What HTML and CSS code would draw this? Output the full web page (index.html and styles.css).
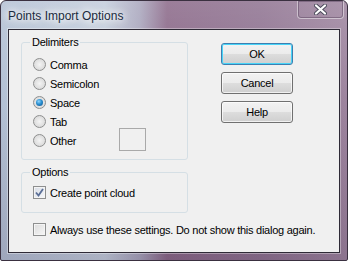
FILE: index.html
```html
<!DOCTYPE html>
<html lang="en">
<head>
    <meta charset="UTF-8">
    <title>Points Import Options</title>
    <link rel="stylesheet" href="styles.css">
</head>
<body>
    <div class="window">
        <div class="titlebar">
            <span class="title">Points Import Options</span>
            <div class="close-btn">
                <svg width="13" height="11" viewBox="0 0 13 11">
                    <path d="M2 1.5 L11 9.5 M11 1.5 L2 9.5" stroke="#4a4a5a" stroke-width="4" stroke-linecap="round"/>
                    <path d="M2 1.5 L11 9.5 M11 1.5 L2 9.5" stroke="#ffffff" stroke-width="2.2" stroke-linecap="round"/>
                </svg>
            </div>
        </div>

        <div class="client">
            <div class="main">
                <div class="left">
                    <fieldset class="group delimiters">
                        <legend>Delimiters</legend>
                        <div class="row"><span class="radio"></span>Comma</div>
                        <div class="row"><span class="radio"></span>Semicolon</div>
                        <div class="row"><span class="radio checked"></span>Space</div>
                        <div class="row"><span class="radio"></span>Tab</div>
                        <div class="row"><span class="radio"></span>Other<span class="other-box"></span></div>
                    </fieldset>

                    <fieldset class="group options">
                        <legend>Options</legend>
                        <div class="row"><span class="check checked">
                            <svg width="9" height="9" viewBox="0 0 9 9"><path d="M1 4.5 L3.5 7.5 L8 1" fill="none" stroke="#5a6e96" stroke-width="1.8"/></svg>
                        </span>Create point cloud</div>
                    </fieldset>
                </div>

                <div class="buttons">
                    <div class="btn default">OK</div>
                    <div class="btn">Cancel</div>
                    <div class="btn">Help</div>
                </div>
            </div>

            <div class="row always"><span class="check"></span>Always use these settings. Do not show this dialog again.</div>
        </div>
    </div>
</body>
</html>
```

FILE: styles.css
```css
body {
    margin: 0;
    width: 348px;
    height: 261px;
    overflow: hidden;
    font-family: "Liberation Sans", Arial, sans-serif;
    font-size: 11px;
    letter-spacing: -0.25px;
    color: #000;
}
.window {
    box-sizing: border-box;
    width: 348px;
    height: 261px;
    padding: 0 7px 7px 7px;
    border: 1px solid #3a3040;
    border-radius: 6px 6px 2px 2px;
    background:
        linear-gradient(to bottom, rgba(255,255,255,0.15), rgba(0,0,0,0) 40%, rgba(40,20,50,0.15)),
        linear-gradient(to right, #b3c0d4 0%, #c3cddc 30%, #a9a6bd 40%, #8a6888 48%, #8e7290 75%, #9d849e 100%);
    display: flex;
    flex-direction: column;
}
.titlebar {
    height: 28px;
    display: flex;
    align-items: flex-start;
    justify-content: space-between;
}
.title {
    margin-top: 8px;
    font-size: 12px;
    letter-spacing: 0;
    color: #1b2b40;
    text-shadow: 0 0 6px #fff, 0 0 10px #fff, 0 0 14px rgba(255,255,255,0.8);
}
.close-btn {
    width: 45px;
    height: 17px;
    margin-right: -4px;
    border: 1px solid rgba(255,255,255,0.45);
    border-top: none;
    border-radius: 0 0 4px 4px;
    box-shadow: inset 0 0 0 1px rgba(60,40,70,0.35);
    display: flex;
    align-items: center;
    justify-content: center;
}
.client {
    flex: 1;
    background-color: #f0f0f0;
    border: 1px solid #2e2a36;
    box-shadow: 0 0 0 1px rgba(255,255,255,0.35);
    padding: 6px 0 0 12px;
}
.main {
    display: flex;
}
.left {
    width: 167px;
}
.group {
    margin: 0;
    padding: 2px 0 0 11px;
    border: 1px solid #d5dfe5;
    border-radius: 3px;
}
.group legend {
    padding: 0 2px;
    margin-left: -3px;
    line-height: 13px;
}
.delimiters {
    padding-top: 6px;
    padding-bottom: 9px;
}
.options {
    margin-top: 6px;
    padding-top: 4px;
    padding-bottom: 10px;
}
.row {
    height: 19px;
    display: flex;
    align-items: center;
}
.radio {
    box-sizing: border-box;
    width: 13px;
    height: 13px;
    margin-right: 4px;
    border-radius: 50%;
    border: 1px solid #8e8f8f;
    background: radial-gradient(circle at 50% 50%, #f4f4f4 0%, #dcdcdc 70%, #cfcfcf 100%);
    display: flex;
    align-items: center;
    justify-content: center;
}
.radio.checked::after {
    content: "";
    width: 7px;
    height: 7px;
    border-radius: 50%;
    background: radial-gradient(circle at 40% 35%, #8fd6ff 0%, #2a8fd0 45%, #0a4d88 100%);
}
.other-box {
    box-sizing: border-box;
    width: 27px;
    height: 23px;
    margin-left: 43px;
    margin-top: -3px;
    border: 1px solid #a9a9a9;
    background-color: #f0f0f0;
}
.check {
    box-sizing: border-box;
    width: 13px;
    height: 13px;
    margin-right: 4px;
    border: 1px solid #8e8f8f;
    background: linear-gradient(135deg, #dcdcdc, #f6f6f6);
    box-shadow: inset 0 0 0 1px #f4f4f4;
    display: flex;
    align-items: center;
    justify-content: center;
}
.check.checked {
    background: linear-gradient(135deg, #d8dde6, #f6f7f9);
}
.always {
    margin: 7px 0 0 12px;
}
.buttons {
    margin-left: 33px;
    margin-top: 7px;
    display: flex;
    flex-direction: column;
    gap: 7px;
}
.btn {
    box-sizing: border-box;
    width: 72px;
    height: 22px;
    border: 1px solid #707070;
    border-radius: 3px;
    background: linear-gradient(to bottom, #f2f2f2 0%, #ebebeb 50%, #dddddd 51%, #cfcfcf 100%);
    box-shadow: inset 0 0 0 1px rgba(255,255,255,0.7);
    display: flex;
    align-items: center;
    justify-content: center;
}
.btn.default {
    border-color: #3c7fb1;
    box-shadow: inset 0 0 0 1px #48d4f8;
}
```
